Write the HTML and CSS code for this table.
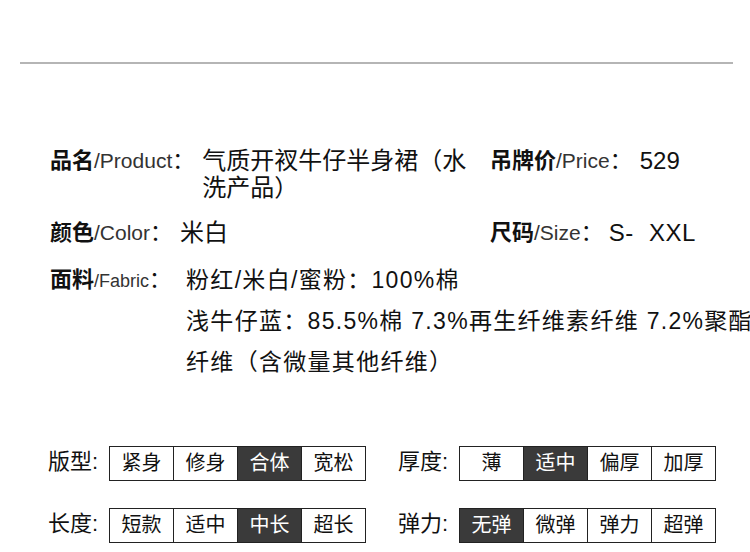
FILE: index.html
```html
<!DOCTYPE html>
<html lang="zh-CN">
<head>
  <meta charset="UTF-8" />
  <title>商品信息</title>
  <link rel="stylesheet" href="styles.css">
</head>
<body>

  <div class="rule"></div>

  <div class="info">
    <div class="row">
      <div class="field wide">
        <span class="label"><b>品名</b><span class="en">/Product</span>：</span>
        <span class="value name">气质开衩牛仔半身裙（水洗产品）</span>
      </div>
      <div class="field">
        <span class="label"><b>吊牌价</b><span class="en">/Price</span>：</span>
        <span class="value">529</span>
      </div>
    </div>

    <div class="row">
      <div class="field wide">
        <span class="label"><b>颜色</b><span class="en">/Color</span>：</span>
        <span class="value">米白</span>
      </div>
      <div class="field">
        <span class="label"><b>尺码</b><span class="en">/Size</span>：</span>
        <span class="value size">S- XXL</span>
      </div>
    </div>

    <div class="row fabric">
      <span class="label"><b>面料</b><span class="en">/Fabric</span>：</span>
      <div class="value">
        粉红/米白/蜜粉：100%棉<br>
        浅牛仔蓝：85.5%棉 7.3%再生纤维素纤维 7.2%聚酯纤维（含微量其他纤维）
      </div>
    </div>
  </div>

  <div class="specs">
    <div class="spec">
      <span class="spec-name">版型:</span>
      <div class="opts">
        <span class="opt">紧身</span>
        <span class="opt">修身</span>
        <span class="opt on">合体</span>
        <span class="opt">宽松</span>
      </div>
    </div>
    <div class="spec">
      <span class="spec-name">厚度:</span>
      <div class="opts">
        <span class="opt">薄</span>
        <span class="opt on">适中</span>
        <span class="opt">偏厚</span>
        <span class="opt">加厚</span>
      </div>
    </div>
    <div class="spec">
      <span class="spec-name">长度:</span>
      <div class="opts">
        <span class="opt">短款</span>
        <span class="opt">适中</span>
        <span class="opt on">中长</span>
        <span class="opt">超长</span>
      </div>
    </div>
    <div class="spec">
      <span class="spec-name">弹力:</span>
      <div class="opts">
        <span class="opt on">无弹</span>
        <span class="opt">微弹</span>
        <span class="opt">弹力</span>
        <span class="opt">超弹</span>
      </div>
    </div>
  </div>

</body>
</html>
```

FILE: styles.css
```css
body {
  margin: 0;
  font-family: "Liberation Sans", "Noto Sans CJK SC", sans-serif;
  background: #fff;
  color: #111;
  width: 750px;
  overflow: hidden;
}

.rule {
  margin: 62px 17px 0 20px;
  height: 2px;
  background: #b5b5b5;
}

.info {
  margin-top: 83px;
  padding-left: 50px;
}

.row {
  display: flex;
  margin-bottom: 18px;
}

.field {
  display: flex;
  align-items: flex-start;
}

.field.wide {
  width: 440px;
}

.label {
  font-size: 22px;
  line-height: 27px;
  white-space: nowrap;
  color: #111;
}

.label b {
  font-weight: bold;
}

.label .en {
  font-size: 21px;
  color: #333;
}

.value {
  font-size: 24px;
  line-height: 27px;
  margin-left: 8px;
  color: #111;
}

.value.name {
  width: 280px;
}

.value.size {
  margin-left: 6px;
  word-spacing: 8px;
  letter-spacing: 0.5px;
}

.fabric {
  margin-top: -4px;
}

.fabric .label {
  line-height: 40px;
}

.fabric .label .en {
  font-size: 18px;
}

.fabric .value {
  width: 575px;
  font-size: 23px;
  letter-spacing: 1.3px;
  line-height: 41px;
  margin-left: 15px;
  flex-shrink: 0;
}

.specs {
  display: grid;
  grid-template-columns: 350px 350px;
  row-gap: 27px;
  margin-top: 63px;
  padding-left: 48px;
}

.spec {
  display: flex;
  align-items: center;
}

.spec-name {
  width: 61px;
  font-size: 22px;
  line-height: 26px;
  padding-bottom: 4px;
  color: #111;
}

.opts {
  display: flex;
  border: 1px solid #222;
}

.opt {
  width: 63px;
  height: 33px;
  line-height: 33px;
  text-align: center;
  font-size: 20px;
  color: #111;
  border-left: 1px solid #222;
}

.opt:first-child {
  border-left: none;
}

.opt.on {
  background: #3a3a3a;
  color: #fff;
}
```
